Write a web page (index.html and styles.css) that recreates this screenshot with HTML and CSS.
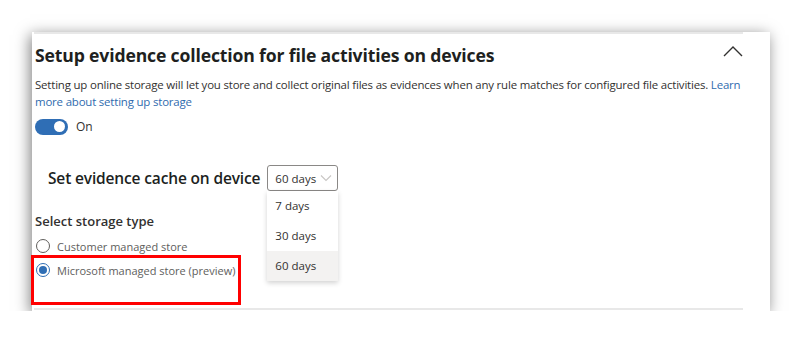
FILE: index.html
```html
<!DOCTYPE html>
<html>
<head>
<meta charset="utf-8">
<link rel="stylesheet" href="styles.css">
</head>
<body>
<div class="stage">
  <div class="card">
    <div class="panel">
      <div class="header">
        <h2 class="title">Setup evidence collection for file activities on devices</h2>
        <svg class="chev" width="20" height="12" viewBox="0 0 20 12"><path d="M1 11 L10 2 L19 11" fill="none" stroke="#323130" stroke-width="1.4"/></svg>
      </div>
      <p class="desc">Setting up online storage will let you store and collect original files as evidences when any rule matches for configured file activities. <a class="link">Learn more about setting up storage</a></p>
      <div class="toggle-row">
        <span class="toggle"><span class="knob"></span></span>
        <span class="toggle-label">On</span>
      </div>
      <div class="cache-row">
        <span class="cache-label">Set evidence cache on device</span>
        <div class="dd">
          <div class="dd-box">
            <span>60 days</span>
            <svg width="12" height="8" viewBox="0 0 12 8"><path d="M1 1.5 L6 6.5 L11 1.5" fill="none" stroke="#c8c6c4" stroke-width="1.1"/></svg>
          </div>
          <ul class="dd-menu">
            <li>7 days</li>
            <li>30 days</li>
            <li class="sel">60 days</li>
          </ul>
        </div>
      </div>
      <div class="storage">
        <div class="storage-label">Select storage type</div>
        <label class="radio"><span class="circle"></span>Customer managed store</label>
        <label class="radio"><span class="circle on"></span>Microsoft managed store (preview)</label>
        <div class="highlight"></div>
      </div>
    </div>
  </div>
</div>
</body>
</html>
```
FILE: styles.css
```css
* { box-sizing: border-box; }
html, body { margin: 0; padding: 0; background: #fff; }
body { font-family: "Open Sans", "Noto Sans", sans-serif; color: #323130; }
.stage { padding: 32px 0 0 32px; }
.card {
  width: 738px;
  height: 279px;
  background: #fff;
  box-shadow: -2px 3px 14px rgba(0,0,0,0.5);
  padding-left: 2px;
}
.panel {
  width: 709px;
  height: 278px;
  border-top: 2px solid #e8e8e8;
  border-bottom: 2px solid #e8e8e8;
  padding: 7px 0 0 1px;
  position: relative;
}
.header { display: flex; justify-content: space-between; align-items: flex-start; }
.title {
  margin: 0;
  font-size: 17.6px;
  font-weight: 700;
  letter-spacing: -0.15px;
  line-height: 28px;
  color: #201f1e;
}
.chev { margin-top: 4px; margin-right: 0; }
.desc {
  margin: 7px 0 0;
  font-size: 11.45px;
  line-height: 17px;
  letter-spacing: -0.18px;
  color: #323130;
}
.link { color: #2f6bae; }
.toggle-row { display: flex; align-items: center; margin-top: 8px; gap: 8px; }
.toggle {
  width: 33px; height: 16px; border-radius: 8px; background: #2f6eb5;
  display: flex; justify-content: flex-end; align-items: center; padding-right: 3px;
}
.knob { width: 11px; height: 11px; border-radius: 50%; background: #fff; }
.toggle-label { font-size: 12px; color: #323130; }
.cache-row { display: flex; align-items: center; margin: 30px 0 0 13px; }
.cache-label { font-size: 15.5px; font-weight: 600; color: #201f1e; margin-right: 7px; letter-spacing: -0.15px; }
.dd { position: relative; }
.dd-box {
  width: 71px; height: 26px; border: 1px solid #8a8886; border-radius: 3px;
  display: flex; align-items: center; justify-content: space-between;
  padding: 0 5px 0 7px; font-size: 11.5px; color: #323130;
}
.dd-menu {
  position: absolute; left: 0; top: 26px; width: 71px; margin: 0; padding: 0;
  list-style: none; background: #fff;
  box-shadow: 0 2px 5px rgba(0,0,0,0.18);
}
.dd-menu li { height: 30px; line-height: 30px; padding-left: 8px; font-size: 11.5px; color: #323130; }
.dd-menu li.sel { background: #f3f2f1; }
.storage { position: relative; margin-top: 21px; }
.storage-label { font-size: 13px; font-weight: 600; color: #323130; margin-bottom: 4px; }
.radio { display: flex; align-items: center; gap: 7px; font-size: 11px; color: #605e5c; height: 24px; padding-left: 1px; }
.circle { width: 14px; height: 14px; border: 1px solid #605e5c; border-radius: 50%; display: inline-block; position: relative; }
.circle.on { border-color: #2f6eb5; }
.circle.on::after {
  content: ""; position: absolute; left: 2px; top: 2px; width: 8px; height: 8px; border-radius: 50%; background: #2f6eb5;
}
.highlight {
  position: absolute; left: -4px; top: 43px; width: 210px; height: 50px;
  border: 3px solid #f00;
}
```
